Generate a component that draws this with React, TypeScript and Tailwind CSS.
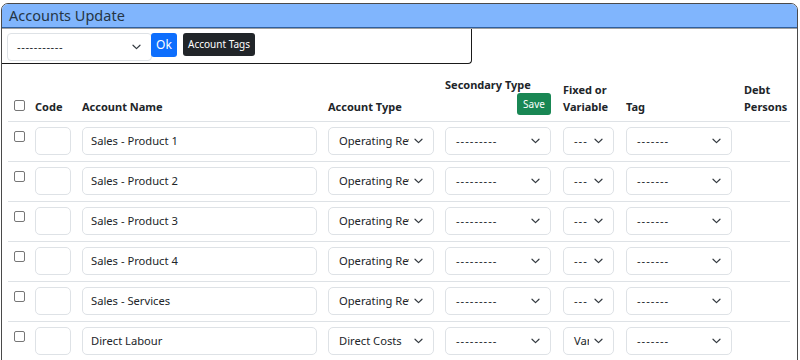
import React from "react";

const Chevron = () => (
  <svg width="9" height="6" viewBox="0 0 9 6" className="shrink-0">
    <path d="M1 1.2 L4.5 4.6 L8 1.2" fill="none" stroke="#343a40" strokeWidth="1.2" strokeLinecap="round" strokeLinejoin="round" />
  </svg>
);

const Box = () => <span className="block w-[11px] h-[11px] border border-[#767676] rounded-[2px] bg-white" />;

const Sel = ({ text, w, dash = false }: { text: string; w: string; dash?: boolean }) => (
  <div className={`${w} h-[28px] border border-[#dee2e6] rounded-[5px] bg-white flex items-center pr-[10px]`}>
    <div
      className={`flex-1 overflow-hidden whitespace-nowrap text-[11.2px] text-[#212529] pl-[10px] mr-[5px] ${dash ? "tracking-[1px]" : ""}`}
    >
      {text}
    </div>
    <Chevron />
  </div>
);

const rows = [
  { name: "Sales - Product 1", type: "Operating Revenue", fixed: "---" },
  { name: "Sales - Product 2", type: "Operating Revenue", fixed: "---" },
  { name: "Sales - Product 3", type: "Operating Revenue", fixed: "---" },
  { name: "Sales - Product 4", type: "Operating Revenue", fixed: "---" },
  { name: "Sales - Services", type: "Operating Revenue", fixed: "---" },
  { name: "Direct Labour", type: "Direct Costs", fixed: "Variable" },
];

const cols = "grid grid-cols-[21px_47px_246px_117px_118px_63px_118px_52px]";

export default function App() {
  return (
    <div className="w-[800px] h-[360px] overflow-hidden bg-white" style={{ fontFamily: '"Noto Sans", "Open Sans", sans-serif' }}>
      <div className="mt-[3px] ml-[1px] w-[797px] h-[400px] border border-[#4a4a4a] rounded-t-[7px] overflow-hidden">
        <div className="h-[24px] bg-[#80b5fd] border-b border-[#2f5f9e] px-[7px] flex items-center text-[14.5px] text-[#253545]">
          Accounts Update
        </div>
        <div className="h-px bg-[#a0a0a0]" />
        <div className="w-[470px] h-[35px] border-r border-b border-[#1a1a1a] rounded-br-[4px] flex items-start pt-[4px] pl-[5px]">
          <div className="w-[145px] h-[28px] border border-[#dee2e6] rounded-[4px] bg-white flex items-center pr-[10px]">
            <div className="flex-1 pl-[9px] text-[11.2px] tracking-[0.6px] text-[#212529] leading-none">-----------</div>
            <Chevron />
          </div>
          <div className="ml-[-1px] w-[26px] h-[24px] bg-[#0d6efd] rounded-[3px] text-white text-[12px] flex items-center justify-center">Ok</div>
          <div className="ml-[6px] w-[72px] h-[23px] bg-[#212529] rounded-[3px] text-white text-[10px] flex items-center justify-center">Account Tags</div>
        </div>

        <div className="ml-[6px] mt-[12px] w-[782px] text-[#212529]">
          <div className={`${cols} items-end border-b border-[#dee2e6] text-[11px] font-bold leading-[17px]`}>
            <div className="pl-[6px] pb-[10px]"><Box /></div>
            <div className="pl-[6px] pb-[6px]">Code</div>
            <div className="pl-[6px] pb-[6px]">Account Name</div>
            <div className="pl-[6px] pb-[6px]">Account Type</div>
            <div className="pl-[6px] pr-[6px] pb-[6px] flex flex-col">
              <div>Secondary Type</div>
              <div className="self-end w-[34px] h-[22px] bg-[#198754] rounded-[3px] text-white text-[10px] font-normal flex items-center justify-center">Save</div>
            </div>
            <div className="pl-[6px] pb-[6px]">Fixed or Variable</div>
            <div className="pl-[6px] pb-[6px]">Tag</div>
            <div className="pl-[6px] pb-[6px]">Debt Persons</div>
          </div>
          {rows.map((r, i) => (
            <div key={i} className={`${cols} items-start border-b border-[#dee2e6] h-[40px]`}>
              <div className="pl-[6px] pt-[9px]"><Box /></div>
              <div className="pl-[6px] pt-[5px]">
                <div className="w-[36px] h-[28px] border border-[#dee2e6] rounded-[5px]" />
              </div>
              <div className="pl-[6px] pt-[5px]">
                <div className="w-[235px] h-[28px] border border-[#dee2e6] rounded-[5px] flex items-center pl-[8px] text-[11.2px]">{r.name}</div>
              </div>
              <div className="pl-[6px] pt-[5px]"><Sel text={r.type} w="w-[106px]" /></div>
              <div className="pl-[6px] pt-[5px]"><Sel text="---------" w="w-[106px]" dash /></div>
              <div className="pl-[6px] pt-[5px]"><Sel text={r.fixed} w="w-[51px]" dash={r.fixed === "---"} /></div>
              <div className="pl-[6px] pt-[5px]"><Sel text="-------" w="w-[106px]" dash /></div>
              <div />
            </div>
          ))}
        </div>
      </div>
    </div>
  );
}
